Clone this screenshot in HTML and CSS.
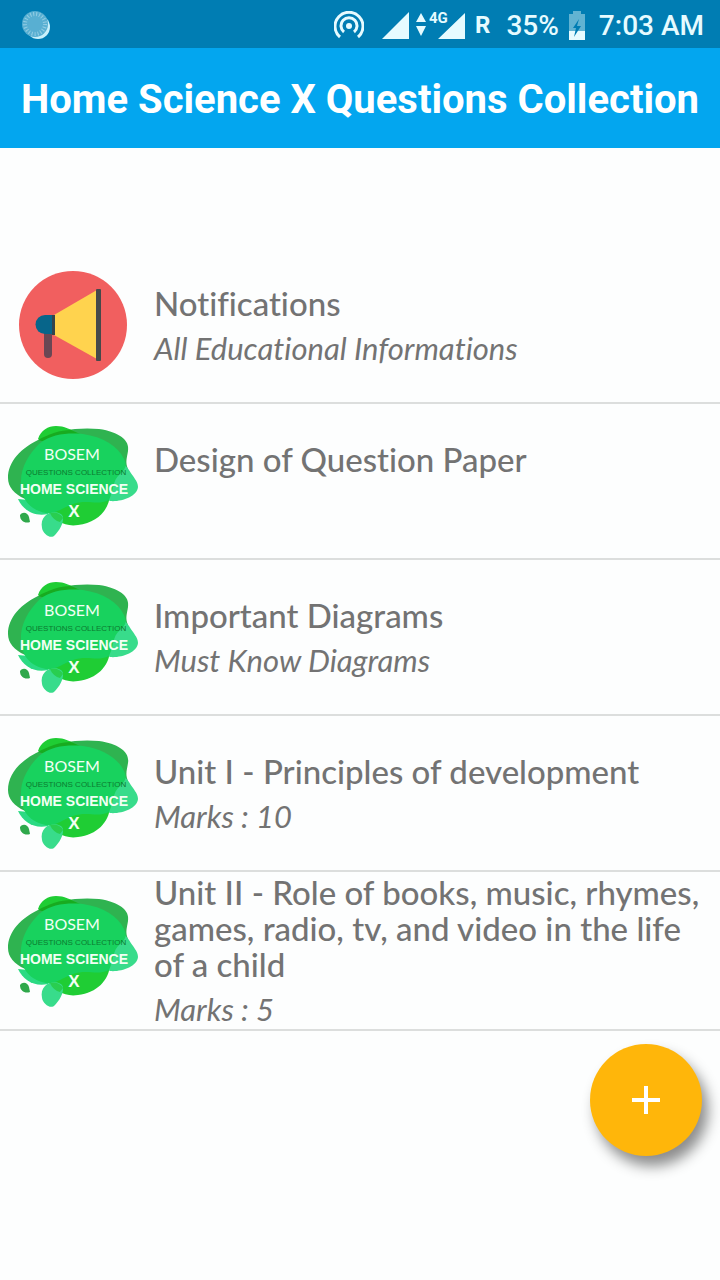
FILE: index.html
```
<!DOCTYPE html>
<html lang="en">
<head>
    <meta charset="UTF-8">
    <meta name="viewport" content="width=device-width, initial-scale=1.0">
    <title>Home Science X Questions Collection</title>
    <link rel="stylesheet" href="styles.css">
</head>
<body>

<!-- shared logo used by the list rows -->
<svg class="defs" aria-hidden="true">
    <symbol id="bosem" viewBox="0 1 146 130">
        <path fill="#2fb350" d="M8 63C8 47 20 33 42 23C57 15 80 12 99 14C119 17 130 25 128 36C127 43 125 47 128 54C131 72 105 90 70 91C36 92 8 82 8 63Z"/>
        <path fill="#1fcd34" d="M38 24C41 15 48 11 56 11C65 11 69 14 80 19L64 32Z"/>
        <path fill="#18ab20" d="M38 25C49 19 60 15 71 15L80 19L64 32Z"/>
        <path fill="#1fcd34" d="M45 94C55 106 65 112 78 110C97 108 109 95 110 80L60 74Z"/>
        <path fill="#38dc8b" d="M96 36C111 38 124 47 129 55C133 62 138 66 138 72C137 82 121 87 110 86L82 70Z"/>
        <path fill="#2bda83" d="M18 84C23 95 34 102 48 99L60 88Z"/>
        <path fill="#18d25e" d="M21 69C20 53 29 39 39 29C52 18 70 18 83 19C103 22 118 31 124 44C127 50 126 54 120 59C112 66 114 75 109 85C97 91 88 84 73 89C62 93 56 99 46 98C30 95 21 84 21 69Z"/>
        <path fill="#38dc8b" d="M45 101C50 96 61 96 63 102C64 108 59 116 55 120C51 125 43 119 42 113C41 108 42 104 45 101Z"/>
        <path fill="#29ce50" d="M50 98C57 97 61 99 63 103L60 107C56 106 52 103 50 98Z"/>
        <path fill="#2fa84b" d="M20 100C23 96 28 98 29 102L30 107C25 109 20 106 20 100Z"/>
        <text class="logo-name" x="72" y="45">BOSEM</text>
        <text class="logo-sub" x="76" y="60">QUESTIONS COLLECTION</text>
        <text class="logo-subject" x="74" y="79">HOME SCIENCE</text>
        <text class="logo-class" x="74" y="102">X</text>
    </symbol>
</svg>

<div class="status-bar">
    <svg class="spinner" width="30" height="30" viewBox="0 0 30 30" aria-hidden="true">
        <circle cx="16" cy="17" r="12" fill="#c9f0fb"/>
        <circle cx="13" cy="14" r="13" fill="#58afd2"/>
        <circle cx="13" cy="14" r="10" fill="none" stroke="#93cde3" stroke-width="4" stroke-dasharray="1 2"/>
    </svg>
    <svg class="hotspot" width="30" height="28" viewBox="0 0 30 28" aria-hidden="true">
        <circle cx="15" cy="15" r="3" fill="#e6fbff"/>
        <path d="M10 21A8 8 0 1 1 20 21M6 26A14 14 0 1 1 24 26" fill="none" stroke="#e6fbff" stroke-width="3"/>
    </svg>
    <svg class="signal" width="84" height="32" viewBox="0 0 84 32" aria-hidden="true">
        <path fill="#e6fbff" d="M0 30L27 3V30ZM56 30L83 4V30ZM34 13L39 4L44 13ZM34 17H44L39 27Z"/>
        <text class="network" x="47" y="14">4G</text>
    </svg>
    <span class="roaming">R</span>
    <span class="percent">35%</span>
    <svg class="battery" width="16" height="30" viewBox="0 0 16 30" aria-hidden="true">
        <path fill="#61b3d2" d="M0 4H4V1H12V4H16V30H0Z"/>
        <path fill="#e6fbff" d="M0 21H16V30H0Z"/>
        <path fill="#007db3" d="M10 9L4 18H7L5 27L12 16H8Z"/>
    </svg>
    <span class="clock">7:03 AM</span>
</div>

<header class="app-bar">
    <h1>Home Science X Questions Collection</h1>
</header>

<main>
    <ul class="list">
        <li>
            <a class="row" href="#notifications">
                <svg class="row-icon" viewBox="0 0 146 130" aria-hidden="true">
                    <circle cx="73" cy="65" r="54" fill="#f15f5f"/>
                    <path d="M44 70H52V94A4 4 0 0 1 44 94Z" fill="#6a4754"/>
                    <path d="M54 55L97 30V99L54 75Z" fill="#ffd34e"/>
                    <path d="M52 55H45A9 9 0 0 0 45 74H52Z" fill="#07658a"/>
                    <path d="M52 55H55V75H52Z" fill="#35444c"/>
                    <rect x="96" y="29" width="5" height="72" rx="1" fill="#46494a"/>
                </svg>
                <span class="row-text">
                    <span class="title">Notifications</span>
                    <span class="subtitle">All Educational Informations</span>
                </span>
            </a>
        </li>
        <li>
            <a class="row" href="#design">
                <svg class="row-icon" aria-hidden="true"><use href="#bosem"/></svg>
                <span class="row-text">
                    <span class="title">Design of Question Paper</span>
                    <span class="subtitle"></span>
                </span>
            </a>
        </li>
        <li>
            <a class="row" href="#diagrams">
                <svg class="row-icon" aria-hidden="true"><use href="#bosem"/></svg>
                <span class="row-text">
                    <span class="title">Important Diagrams</span>
                    <span class="subtitle">Must Know Diagrams</span>
                </span>
            </a>
        </li>
        <li>
            <a class="row" href="#unit-1">
                <svg class="row-icon" aria-hidden="true"><use href="#bosem"/></svg>
                <span class="row-text">
                    <span class="title">Unit I - Principles of development</span>
                    <span class="subtitle">Marks : 10</span>
                </span>
            </a>
        </li>
        <li>
            <a class="row" href="#unit-2">
                <svg class="row-icon" aria-hidden="true"><use href="#bosem"/></svg>
                <span class="row-text">
                    <span class="title">Unit II - Role of books, music, rhymes, games, radio, tv, and video in the life of a child</span>
                    <span class="subtitle">Marks : 5</span>
                </span>
            </a>
        </li>
    </ul>
</main>

<button class="fab" type="button" aria-label="Add">
    <svg width="28" height="28" viewBox="0 0 28 28" aria-hidden="true">
        <path d="M14 0V28M0 14H28" stroke="#fff" stroke-width="4"/>
    </svg>
</button>

</body>
</html>
```
FILE: styles.css
```
* {
    box-sizing: border-box;
}
body {
    margin: 0;
    font-family: Lato, sans-serif;
    background-color: #fdfefe;
    color: #737373;
}
.defs {
    display: none;
}
.status-bar {
    display: flex;
    align-items: center;
    height: 48px;
    padding: 2px 16px 0 22px;
    background-color: #007db3;
    color: #e6fbff;
    font-family: Roboto, sans-serif;
    font-size: 28px;
    font-weight: 500;
}
.hotspot {
    margin-left: auto;
}
.signal {
    margin-left: 18px;
}
.network {
    fill: #e6fbff;
    font-size: 15px;
    font-weight: 700;
}
.roaming {
    margin-left: 9px;
    font-size: 24px;
    font-weight: 700;
}
.percent {
    margin-left: 16px;
}
.battery {
    margin: 0 14px 0 10px;
}
.app-bar {
    display: flex;
    align-items: center;
    justify-content: center;
    min-height: 100px;
    padding-top: 2px;
    background-color: #03a6ef;
}
.app-bar h1 {
    margin: 0;
    color: #fff;
    font-family: Roboto, sans-serif;
    font-size: 40px;
    font-weight: 700;
}
.list {
    margin: 100px 0 0;
    padding: 0;
    list-style: none;
}
.row {
    display: flex;
    align-items: center;
    gap: 8px;
    min-height: 156px;
    padding: 2px 8px 2px 0;
    border-bottom: 2px solid #dcdedd;
    color: inherit;
    font-variant-ligatures: none;
    text-decoration: none;
}
.row-icon {
    flex: none;
    width: 146px;
    height: 130px;
}
.row-text {
    display: flex;
    flex-direction: column;
    gap: 9px;
}
.title {
    font-size: 33px;
    font-weight: 500;
    line-height: 36px;
}
.subtitle {
    min-height: 36px;
    font-size: 31px;
    font-style: italic;
    font-weight: 400;
    line-height: 36px;
}
.logo-name,
.logo-sub,
.logo-subject,
.logo-class {
    fill: #f2fff4;
    text-anchor: middle;
}
.logo-name {
    font-family: Lato, sans-serif;
    font-size: 16px;
}
.logo-sub {
    fill: #0c7a30;
    font-family: "Liberation Sans", sans-serif;
    font-size: 8px;
}
.logo-subject {
    font-family: "Liberation Sans", sans-serif;
    font-size: 14px;
    font-weight: 700;
}
.logo-class {
    font-family: "Liberation Sans", sans-serif;
    font-size: 17px;
    font-weight: 700;
}
.fab {
    position: fixed;
    right: 18px;
    bottom: 124px;
    display: flex;
    align-items: center;
    justify-content: center;
    width: 112px;
    height: 112px;
    padding: 0;
    border: none;
    border-radius: 50%;
    background-color: #ffb60a;
    box-shadow: 6px 10px 14px rgba(0, 0, 0, 0.45);
    cursor: pointer;
}
```
